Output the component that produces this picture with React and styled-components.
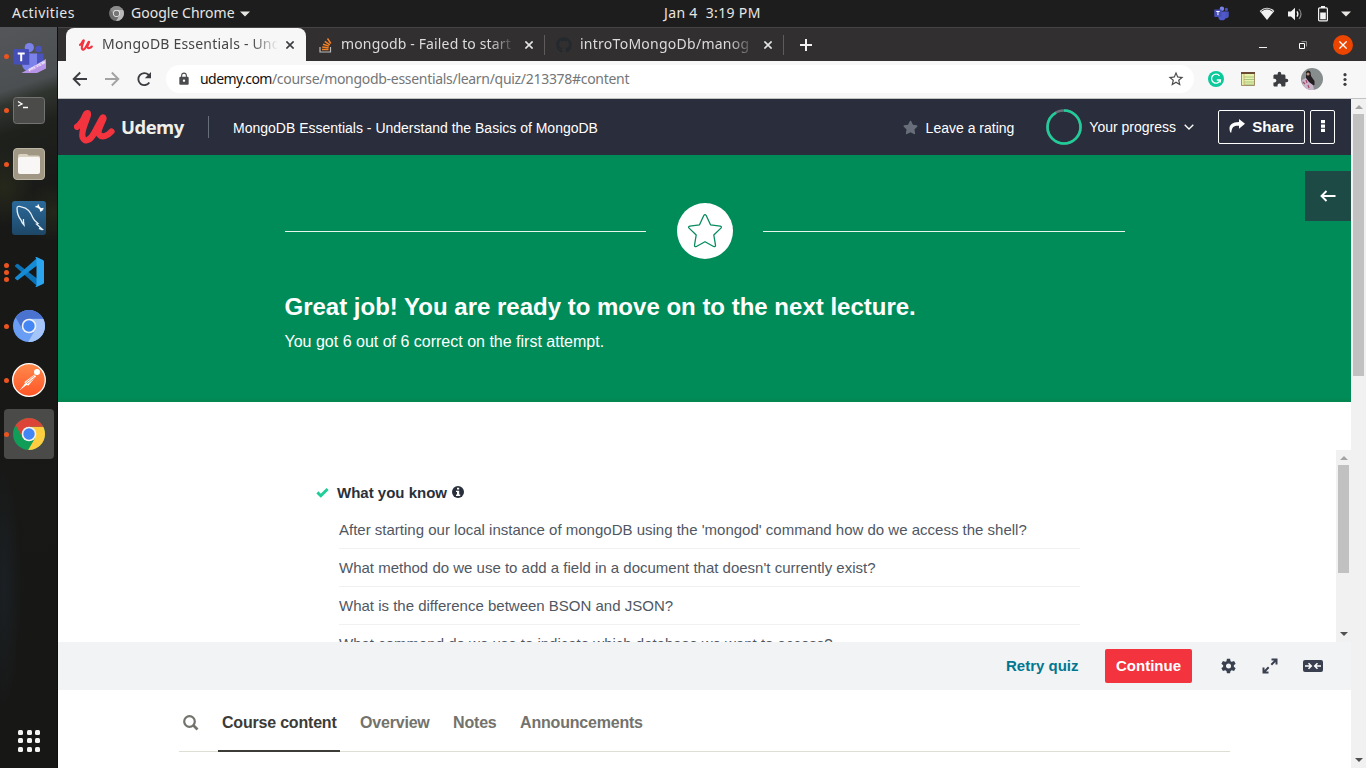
import React from "react";
import styled, { createGlobalStyle } from "styled-components";
import { FaGithub, FaStar } from "react-icons/fa";
import { MdExtension, MdStarBorder, MdLock } from "react-icons/md";

const GlobalStyle = createGlobalStyle`
  * { box-sizing: border-box; }
  body { margin: 0; overflow: hidden; background: #1d1d1d; font-family: "Liberation Sans", Arial, sans-serif; }
  svg { display: block; flex: none; }
`;

const uiFont = `"Noto Sans", "Open Sans", sans-serif`;

const Desktop = styled.div`
  width: 1366px;
  height: 768px;
  display: flex;
  flex-direction: column;
  overflow: hidden;
`;

/* ---------- system bar ---------- */
const SystemBar = styled.header`
  height: 27px;
  flex: none;
  display: grid;
  grid-template-columns: 664px auto 1fr;
  align-items: center;
  background: #1d1d1d;
  color: #e8e6e3;
  font: 14.5px ${uiFont};
`;
const SystemLeft = styled.div`
  display: flex;
  align-items: center;
  padding-left: 12px;
`;
const SystemRight = styled.div`
  display: flex;
  align-items: center;
  justify-content: flex-end;
  padding-right: 15px;
`;
const SystemText = styled.span`
  white-space: pre;
  line-height: 24px;
  padding-bottom: 2px;
  font-size: ${(p) => p.$size || 14}px;
  letter-spacing: ${(p) => p.$track || 0}px;
  width: ${(p) => p.$width}px;
`;
const Spacer = styled.span`
  flex: none;
  width: ${(p) => p.$w}px;
`;

/* ---------- dock ---------- */
const Body = styled.div`
  flex: 1;
  display: flex;
  min-height: 0;
`;
const Dock = styled.nav`
  width: 58px;
  flex: none;
  display: flex;
  flex-direction: column;
  justify-content: space-between;
  padding-top: 2px;
  border-right: 1px solid #0f0f10;
  background:
    radial-gradient(ellipse 30px 40px at 4px 160px, #26281b, transparent),
    radial-gradient(ellipse 34px 30px at 54px 185px, #24271a, transparent),
    radial-gradient(ellipse 16px 120px at 4px 560px, #1b2024, transparent),
    linear-gradient(162deg, #54565a 0, #4c4f51 62px, #30342f 76px, #1f211d 104px, #181917 180px, #171716 100%);
`;
const DockItem = styled.div`
  height: 54px;
  display: flex;
  align-items: center;
  padding-left: 4px;
`;
const DockTile = styled.div`
  width: 50px;
  height: 50px;
  border-radius: 4px;
  display: flex;
  align-items: center;
  background: ${(p) => (p.$active ? "#4a4a49" : "transparent")};
`;
const Dots = styled.span`
  width: 5px;
  flex: none;
  margin-right: 3.5px;
  display: flex;
  flex-direction: column;
  gap: 2px;
`;
const Dot = styled.i`
  width: 5px;
  height: 5px;
  border-radius: 50%;
  background: #e95420;
`;
const DockIcon = styled.div`
  width: 33px;
  display: flex;
  justify-content: center;
`;
const AppGrid = styled.div`
  display: grid;
  grid-template-columns: repeat(3, 5px);
  gap: 3.6px;
  margin: 0 0 16px 18px;
`;
const AppDot = styled.i`
  height: 5px;
  border-radius: 1.5px;
  background: #f4f4f2;
`;

/* ---------- browser chrome ---------- */
const Browser = styled.div`
  flex: 1;
  min-width: 0;
  display: flex;
  flex-direction: column;
`;
const TabStrip = styled.div`
  height: 34px;
  flex: none;
  display: flex;
  align-items: center;
  padding-left: 8px;
  background: #312f30;
  border-top: 1px solid #464445;
`;
const Tab = styled.div`
  width: ${(p) => p.$w}px;
  height: 33px;
  display: flex;
  align-items: center;
  padding: 0 10px 0 ${(p) => p.$pl}px;
  border-radius: 8px 8px 0 0;
  background: ${(p) => (p.$active ? "#f7f7f7" : "transparent")};
  color: ${(p) => (p.$active ? "#454545" : "#dcdcdc")};
`;
const TabTitle = styled.span`
  width: ${(p) => p.$w}px;
  margin-left: ${(p) => p.$ml || 8}px;
  padding-bottom: 2px;
  overflow: hidden;
  white-space: nowrap;
  font: 14px ${uiFont};
  letter-spacing: ${(p) => p.$track}px;
  line-height: 22px;
  mask-image: linear-gradient(90deg, #000 calc(100% - 26px), transparent);
`;
const TabDivider = styled.span`
  width: 1px;
  height: 20px;
  background: #5d5b5c;
`;
const WindowButtons = styled.div`
  margin-left: auto;
  display: flex;
  align-items: center;
  padding-right: 13px;
`;
const CloseWindow = styled.div`
  width: 20px;
  height: 20px;
  border-radius: 50%;
  display: grid;
  place-items: center;
  background: #eb4500;
`;
const Toolbar = styled.div`
  height: 38px;
  flex: none;
  display: flex;
  align-items: center;
  padding: 0 15px 1px 14px;
  background: #f7f7f7;
  border-bottom: 1px solid #c1c3c3;
`;
const AddressBar = styled.div`
  width: 1028px;
  height: 28px;
  margin-left: 14px;
  border-radius: 14px;
  display: flex;
  align-items: center;
  padding: 0 9px 0 11px;
  background: #fff;
  color: #4b4c4e;
`;
const Url = styled.span`
  flex: 1;
  margin-left: 9px;
  font: 14px ${uiFont};
  line-height: 22px;
  letter-spacing: -0.3px;
  color: #747678;
`;
const Host = styled.span`
  color: #111;
  letter-spacing: -0.55px;
`;
const Avatar = styled.div`
  width: 22px;
  height: 22px;
  border-radius: 50%;
  overflow: hidden;
`;

/* ---------- page ---------- */
const Viewport = styled.div`
  flex: 1;
  min-height: 0;
  display: flex;
  background: #fff;
`;
const Page = styled.main`
  flex: 1;
  min-width: 0;
  display: flex;
  flex-direction: column;
`;
const Scrollbar = styled.div`
  width: 15px;
  flex: none;
  display: flex;
  flex-direction: column;
  align-items: center;
  background: #f1f1f1;
`;
const ScrollArrow = styled.span`
  width: 0;
  height: 0;
  margin-top: ${(p) => (p.$down ? "auto" : "6px")};
  margin-bottom: ${(p) => (p.$down ? p.$gap : 5)}px;
  border: 4px solid transparent;
  border-top: ${(p) => (p.$down ? "4px solid #505050" : "0")};
  border-bottom: ${(p) => (p.$down ? "0" : "4px solid #a3a3a3")};
`;
const Thumb = styled.span`
  width: 11px;
  height: ${(p) => p.$h}px;
  background: #c1c1c1;
`;
const CourseHeader = styled.header`
  height: 56px;
  flex: none;
  display: flex;
  align-items: center;
  padding: 0 16px;
  background: #2a2d3c;
  color: #fff;
`;
const Brand = styled.span`
  margin: -1px 0 0 6px;
  width: 65px;
  font: 700 18.5px "Open Sans", sans-serif;
  letter-spacing: -0.5px;
  color: #f0f0ea;
`;
const HeaderDivider = styled.span`
  width: 1px;
  height: 22px;
  margin: 0 24px 0 22px;
  background: #686f7a;
`;
const CourseTitle = styled.span`
  flex: 1;
  padding-top: 2px;
  font-size: 14px;
  white-space: nowrap;
`;
const HeaderText = styled.span`
  padding-top: ${(p) => p.$pt || 0}px;
  font-size: 14px;
  white-space: nowrap;
`;
const OutlineButton = styled.button`
  width: ${(p) => p.$w}px;
  height: 34px;
  margin-left: ${(p) => p.$ml}px;
  padding: 0 0 2px;
  display: flex;
  align-items: center;
  justify-content: center;
  gap: 7px;
  border: 1px solid #fff;
  border-radius: 2px;
  background: transparent;
  color: #fff;
  font: bold 15px "Liberation Sans", sans-serif;
`;
const Result = styled.section`
  height: 247px;
  flex: none;
  position: relative;
  padding: 48px 226px 0 227px;
  background: linear-gradient(#008c59 0, #008c59 242px, #04854f 100%);
  color: #fff;
`;
const OpenSidebar = styled.div`
  position: absolute;
  top: 16px;
  right: 0;
  width: 46px;
  height: 50px;
  display: grid;
  place-items: center;
  background: #1e4a45;
`;
const Ornament = styled.div`
  display: flex;
  align-items: center;
  justify-content: space-between;
`;
const Rule = styled.span`
  width: ${(p) => p.$w}px;
  height: 1px;
  background: #e9f6f0;
`;
const Badge = styled.div`
  width: 56px;
  height: 56px;
  border-radius: 50%;
  display: grid;
  place-items: center;
  background: #fff;
`;
const ResultTitle = styled.h1`
  margin: 32px 0 0 -0.5px;
  font-size: 24px;
  line-height: 32px;
`;
const ResultText = styled.p`
  margin: 8px 0 0 -0.5px;
  font-size: 16px;
  line-height: 22px;
`;
const Report = styled.section`
  height: 240px;
  flex: none;
  display: flex;
  padding-top: 48px;
  overflow: hidden;
`;
const Knowledge = styled.div`
  flex: 1;
  height: 192px;
  overflow: hidden;
  padding: 32px 256px 0 258px;
`;
const KnowledgeHead = styled.h2`
  margin: 0 0 9px;
  display: flex;
  align-items: center;
  height: 20px;
  font-size: 15px;
  color: #29303b;
`;
const HeadText = styled.span`
  margin: 0 5px 0 8px;
`;
const Question = styled.div`
  height: 38px;
  margin-left: 23px;
  padding-top: 10px;
  border-bottom: 1px solid #f0f1f2;
  font-size: 15px;
  line-height: 18px;
  color: #505763;
`;
const QuizBar = styled.footer`
  height: 48px;
  flex: none;
  display: flex;
  align-items: center;
  justify-content: flex-end;
  padding-right: 28px;
  background: #f2f3f5;
  font-size: 15px;
  font-weight: bold;
  color: #3a4050;
`;
const Retry = styled.span`
  padding-bottom: 2px;
  color: #007791;
`;
const Continue = styled.button`
  width: 87px;
  height: 34px;
  margin: 0 29px 0 26.5px;
  padding: 0 0 2px;
  border: 0;
  border-radius: 2px;
  background: #f3343f;
  color: #fff;
  font: bold 15px "Liberation Sans", sans-serif;
`;
const CourseTabs = styled.nav`
  height: 62px;
  margin: 0 121px;
  display: flex;
  border-bottom: 1px solid #dedfd4;
`;
const CourseTab = styled.div`
  height: 62px;
  padding: 23px 3.5px 0 4px;
  margin-right: 16px;
  font-size: 16px;
  line-height: 20px;
  font-weight: bold;
  white-space: nowrap;
  letter-spacing: -0.2px;
  color: ${(p) => (p.$active ? "#3c3b37" : "#73726c")};
  border-bottom: ${(p) => (p.$active ? "2px solid #3c3b37" : "0")};
`;
const SearchTab = styled.div`
  width: 39px;
  padding: 25px 0 0 4px;
`;

/* ---------- drawings ---------- */
const ChromeLogo = ({ size, top, left, right, core }) => (
  <svg width={size} height={size} viewBox="0 0 32 32">
    <clipPath id={"disc" + core.slice(1) + size}><circle cx="16" cy="16" r="16" /></clipPath>
    <g clipPath={`url(#disc${core.slice(1)}${size})`}>
      <path d="M0 0h32v32H0z" fill={left} />
      <path d="M16 8.7H32V32L14.3 33.5 22.3 19.7 16 16z" fill={right} />
      <path d="M16 8.7H32V0H0l1.7 5.8 8 13.9L16 16z" fill={top} />
    </g>
    <circle cx="16" cy="16" r="7.3" fill="#f2f2f2" />
    <circle cx="16" cy="16" r="5.7" fill={core} />
  </svg>
);

const TeamsLogo = ({ size, preview }) => (
  <svg width={size} height={size * 0.97} viewBox={preview ? "0 -2 33 32" : "0 0 33 32"} overflow="visible">
    <circle cx="25.6" cy="7" r="3.2" fill="#4b53bc" />
    <path d="M22 11.5h8.5v9a5.5 5.5 0 0 1-8.5 4z" fill="#4b53bc" />
    <circle cx="16.3" cy="5.6" r="4.6" fill="#7b83eb" />
    <path d="M9 11.5h15V22a7.5 7.5 0 0 1-15 0z" fill={preview ? "#7b83eb" : "#5059c9"} />
    <path d="M9 11.5h7.5V23H9.400z" fill="#5a61cf" />
    <rect x=".5" y="7" width="15.500" height="15.500" rx="1.300" fill="#464eb8" />
    <path d="M4.700 10.500h7v1.900H9.200v6.900H7.200v-6.900H4.700z" fill="#fff" />
    {preview && (
      <g>
        <path d="M8.500 31 33 17v9.500L24 31z" fill="#b794e8" />
        <text x="16.500" y="29.800" transform="rotate(-29 16.500 29.800)" fontSize="4" fontWeight="bold" fontFamily="Liberation Sans" fill="#fff">PREVIEW</text>
      </g>
    )}
  </svg>
);

const TerminalIcon = () => (
  <svg width="32" height="27" viewBox="0 0 32 27">
    <rect x=".5" y=".5" width="31" height="26" rx="3" fill="#4b4b4a" stroke="#737372" />
    <path d="M5 4.500 9 7 5 9M10 10.500h5" stroke="#fff" strokeWidth="1.300" fill="none" />
  </svg>
);
const FilesIcon = () => (
  <svg width="32" height="32" viewBox="0 0 32 32">
    <rect x=".5" y=".5" width="31" height="31" rx="3.500" fill="#a09884" stroke="#bcb5a3" />
    <path d="M5 8q0-2 2-2h6.500q1.500 0 2 1.500H25q2 0 2 2V24H5z" fill="#d9d2c1" />
    <rect x="5" y="9" width="22" height="17" rx="2" fill="#f8f7f5" />
  </svg>
);
const MySqlIcon = () => (
  <svg width="34" height="34" viewBox="0 0 34 34">
    <linearGradient id="sea" x2="0" y2="1"><stop stopColor="#2b6a9b" /><stop offset="1" stopColor="#1d4767" /></linearGradient>
    <rect width="34" height="34" rx="3" fill="url(#sea)" />
    <path d="M9 19C5.500 15 5 9 5 7c0-2 3-2 5-.8C16 7 19 12 21 17c1 2.500 3 4 5 5.500l-1.500.5 5.500 5-3-.5 3.500 1.500M9 19c.5 2 1.500 3.500 3 5-.5-3-.8-4-.5-6" fill="none" stroke="#e8f0f6" strokeWidth="1.300" />
    <path d="M25.500 5 28 7.500 30.500 9.500" stroke="#fff" strokeWidth="2" fill="none" />
    <path d="M23.500 5.500 26 6l.5-2.500M28.500 10.500 29 8l2.500-.5" stroke="#fff" strokeWidth="1.400" fill="none" />
  </svg>
);
const VsCodeIcon = () => (
  <svg width="30" height="30" viewBox="0 0 30 30">
    <path d="M1 8.500 2.800 7q.6-.4 1.200 0L23 21.500V29L1.200 9.500q-.6-.5-.2-1z" fill="#0b72b8" />
    <path d="M1 21.500 2.800 23q.6.400 1.200 0L23 8.500V1L1.200 20.500q-.6.500-.2 1z" fill="#168bd5" />
    <path d="M22.500 0 29 3q1 .5 1 1.500v21q0 1-1 1.500l-6.500 3-1.500-.7q1.500.2 1.500-1.500V2.500Q22.500 1 21 .8z" fill="#2ba5ef" />
  </svg>
);
const PostmanIcon = () => (
  <svg width="34" height="34" viewBox="0 0 34 34">
    <linearGradient id="flame" x2="0" y2="1"><stop stopColor="#ff8a4c" /><stop offset="1" stopColor="#ff5527" /></linearGradient>
    <circle cx="17" cy="17" r="16.300" fill="url(#flame)" stroke="#fff" strokeWidth="1.300" />
    <circle cx="25" cy="9" r="3" fill="#fff" />
    <path d="m22.500 11.500 1.500 2-7.500 9-2-.500-7 5.500 5.500-7-.5-1.500z" fill="#fff" />
    <path d="m13.500 20 9-7.500M15 21l8-6.500" stroke="#ff7340" strokeWidth=".8" />
  </svg>
);
const UdemyMark = ({ width, height }) => (
  <svg width={width} height={height} viewBox="0 0 41 34">
    <path d="M3 16.800C7 14 9.500 9.500 11 6 12.500 2.500 14.800 2 13.700 6 12 12 6.500 22 8.700 27.500c2 5.500 8 2.500 11.500-4.500L28 8.500c.8-1.500 2-1.200 1.300.6C27 15 23 21.500 25.200 24.500c2.800 3.500 8.300 1.500 12.300-3" fill="none" stroke="#f3343f" strokeWidth="6.300" strokeLinecap="round" strokeLinejoin="round" />
  </svg>
);
const Cross = ({ color, size = 8, weight = 1.6 }) => (
  <svg width={size} height={size} viewBox="0 0 8 8">
    <path d="m.4.4 7.200 7.200M7.600.4.4 7.600" stroke={color} strokeWidth={weight} />
  </svg>
);
const BackIcon = () => (
  <svg width="16" height="16" viewBox="0 0 16 16">
    <path d="M15 8H2M8.200 1.500 1.700 8l6.500 6.500" fill="none" stroke="#3c3d40" strokeWidth="1.900" />
  </svg>
);
const ForwardIcon = () => (
  <svg width="16" height="16" viewBox="0 0 16 16">
    <path d="M1 8h13M7.800 1.500 14.300 8l-6.500 6.500" fill="none" stroke="#a3a3a4" strokeWidth="1.900" />
  </svg>
);
const ReloadIcon = () => (
  <svg width="16" height="16" viewBox="0 0 16 16">
    <path d="M13.300 11.500A6 6 0 1 1 12.500 3.800L14 5.500" fill="none" stroke="#3c3d40" strokeWidth="1.900" />
    <path d="M15 1v6.200H8.800z" fill="#3c3d40" />
  </svg>
);
const StackIcon = () => (
  <svg width="14" height="16" viewBox="0 0 14 16">
    <path d="M1 10v5h10.500v-5" fill="none" stroke="#bcbbbb" strokeWidth="1.200" />
    <path d="M3 12.600h6.500M3.200 10l6.400.7M4 7.200l6 1.900M5.800 4.300l5 3.500M8.500 1.500l3.300 5" stroke="#f48024" strokeWidth="1.500" />
  </svg>
);
const Dots3 = ({ color, size = 13 }) => (
  <svg width="4" height={size} viewBox="0 0 4 13">
    {[1.7, 6.5, 11.3].map((y) => <circle key={y} cx="2" cy={y} r="1.600" fill={color} />)}
  </svg>
);
const ShareArrow = () => (
  <svg width="16" height="14" viewBox="0 0 16 14">
    <path d="M10 0l6 4.800-6 5V6.800C5.500 6.500 2.800 7.500 2.300 13.500H1.300C-.8 8 .8 3 10 2.900z" fill="#fff" />
  </svg>
);
const CheckMark = () => (
  <svg width="13" height="11" viewBox="0 0 13 11">
    <path d="m1.400 5.400 3.400 3.400 6.800-6.800" fill="none" stroke="#1ecd97" strokeWidth="2.900" />
  </svg>
);
const InfoMark = () => (
  <svg width="12" height="12" viewBox="0 0 12 12">
    <circle cx="6" cy="6" r="6" fill="#29303b" />
    <path d="M5 1.800h2.200v1.700H5zM4 4.700h3.200v3.800h1V10H4V8.500h1V6.100H4z" fill="#fff" />
  </svg>
);
const gearTeeth = [0, 60, 120, 180, 240, 300];
const Gear = () => (
  <svg width="15" height="16" viewBox="0 0 16 16">
    <circle cx="8" cy="8" r="4.200" fill="none" stroke="#3a4050" strokeWidth="3" />
    {gearTeeth.map((deg) => (
      <path key={deg} d="M6.300.2h3.400l.6 3.300H5.700z" fill="#3a4050" transform={`rotate(${deg} 8 8)`} />
    ))}
  </svg>
);
const ExpandIcon = () => (
  <svg width="16" height="16" viewBox="0 0 16 16" fill="none" stroke="#3a4050" strokeWidth="2">
    <path d="M9.500 1.500h5V6.500M14.500 1.500 9.300 6.700M6.500 14.500h-5V9.500M1.500 14.500l5.200-5.200" />
  </svg>
);
const TheaterIcon = () => (
  <svg width="20" height="12" viewBox="0 0 20 12">
    <rect width="20" height="12" rx="2" fill="#3a4050" />
    <path d="M2 6h6M5.500 3.200 8.300 6 5.500 8.800M18 6h-6M14.500 3.200 11.700 6l2.800 2.800" fill="none" stroke="#fff" strokeWidth="1.500" />
  </svg>
);
const SearchGlyph = () => (
  <svg width="16" height="16" viewBox="0 0 16 16" fill="none" stroke="#73726c">
    <circle cx="6.500" cy="6.500" r="5.300" strokeWidth="2.200" />
    <path d="m10.500 10.500 4 4" strokeWidth="2.700" />
  </svg>
);
const OutlineStar = () => (
  <svg width="36" height="36" viewBox="0 0 36 36">
    <path d="M16.800 2.500q1.200-1.800 2.400 0l4.300 9.300 9.700 1.300q2 .5.700 2L26.800 22l1.700 10.200q0 2-1.900 1.300L18 28.700l-8.600 4.800q-1.900.7-1.900-1.300L9.200 22 2.100 15.100q-1.300-1.500.7-2l9.700-1.300z" fill="none" stroke="#078b60" strokeWidth="1.300" strokeLinejoin="round" />
  </svg>
);

const dockApps = [
  { id: "teams", dots: 1, icon: <TeamsLogo size={33} preview /> },
  { id: "terminal", dots: 1, icon: <TerminalIcon /> },
  { id: "files", dots: 1, icon: <FilesIcon /> },
  { id: "mysql", dots: 0, icon: <MySqlIcon /> },
  { id: "code", dots: 3, icon: <VsCodeIcon /> },
  { id: "chromium", dots: 1, icon: <ChromeLogo size={32} top="#4a73d0" left="#6a9df4" right="#a4c5fa" core="#4486f4" /> },
  { id: "postman", dots: 1, icon: <PostmanIcon /> },
  { id: "chrome", dots: 1, active: true, icon: <ChromeLogo size={32} top="#db4437" left="#0f9d58" right="#ffcd40" core="#4285f4" /> },
];

const questions = [
  "After starting our local instance of mongoDB using the 'mongod' command how do we access the shell?",
  "What method do we use to add a field in a document that doesn't currently exist?",
  "What is the difference between BSON and JSON?",
  "What command do we use to indicate which database we want to access?",
];

const TopPanel = () => (
  <SystemBar>
    <SystemLeft>
      <SystemText $width={97} $track={0.45}>Activities</SystemText>
      <ChromeLogo size={15} top="#8b8b8b" left="#6e6e6e" right="#b8b8b8" core="#777777" />
      <Spacer $w={7} />
      <SystemText $width={109} $track={0.02}>Google Chrome</SystemText>
      <svg width="10" height="6"><path d="M0 .5h10L5 5.500z" fill="#e8e6e3" /></svg>
    </SystemLeft>
    <SystemText $size={14} $width={97} $track={0.35}>Jan 4  3:19 PM</SystemText>
    <SystemRight>
      <TeamsLogo size={16} />
      <Spacer $w={29} />
      <svg width="16" height="14" viewBox="0 0 16 14">
        <path d="M.7 4Q8-2.500 15.300 4L8 13z" fill="#f2f2f2" />
        <path d="M2.300 4.300Q8-.3 13.700 4.300" fill="none" stroke="#1d1d1d" strokeWidth=".8" />
      </svg>
      <Spacer $w={13} />
      <svg width="15" height="14" viewBox="0 0 15 14">
        <path d="M0 4.500h3L7 .8v12.400L3 9.500H0z" fill="#f2f2f2" />
        <path d="M9 4.300q1.800 2.700 0 5.400" fill="none" stroke="#f2f2f2" strokeWidth="1.300" />
        <path d="M11 2q4 5 0 10" fill="none" stroke="#8a8a8a" strokeWidth="1.200" />
      </svg>
      <Spacer $w={15} />
      <svg width="10" height="16" viewBox="0 0 10 16">
        <path d="M3 0h4v2H3z" fill="#f2f2f2" />
        <rect x=".6" y="1.900" width="8.800" height="13" rx="1" fill="none" stroke="#f2f2f2" strokeWidth="1.200" />
        <path d="M2.200 6.500h5.600v6.800H2.200z" fill="#f2f2f2" />
      </svg>
      <Spacer $w={13} />
      <svg width="10" height="6"><path d="M0 .5h10L5 5.500z" fill="#e8e6e3" /></svg>
    </SystemRight>
  </SystemBar>
);

const Launcher = () => (
  <Dock>
    <div>
      {dockApps.map((app) => (
        <DockItem key={app.id}>
          <DockTile $active={app.active}>
            <Dots>{Array.from({ length: app.dots }, (_, i) => <Dot key={i} />)}</Dots>
            <DockIcon>{app.icon}</DockIcon>
          </DockTile>
        </DockItem>
      ))}
    </div>
    <AppGrid>{Array.from({ length: 9 }, (_, i) => <AppDot key={i} />)}</AppGrid>
  </Dock>
);

const Tabs = () => (
  <TabStrip>
    <Tab $active $w={240} $pl={13}>
      <UdemyMark width={14} height={12} />
      <TabTitle $w={176} $ml={9} $track={0.2}>MongoDB Essentials - Und</TabTitle>
      <Spacer $w={8} />
      <Cross color="#3c3d40" />
    </Tab>
    <Tab $w={238} $pl={13}>
      <StackIcon />
      <TabTitle $w={175} $track={0.14}>mongodb - Failed to start m</TabTitle>
      <Spacer $w={9} />
      <Cross color="#e4e4e4" />
    </Tab>
    <TabDivider />
    <Tab $w={238} $pl={11}>
      <FaGithub size={16} color="#24292e" />
      <TabTitle $w={175} $track={0.26}>introToMongoDb/manog</TabTitle>
      <Spacer $w={9} />
      <Cross color="#e4e4e4" />
    </Tab>
    <TabDivider />
    <Spacer $w={16} />
    <svg width="12" height="12"><path d="M6 0v12M0 6h12" stroke="#f2f2f2" strokeWidth="2" /></svg>
    <WindowButtons>
      <svg width="8" height="8"><path d="M0 6.500h8" stroke="#f2f2f2" /></svg>
      <Spacer $w={32} />
      <svg width="8" height="8" fill="none"><path d="M2.500.5h5v5" stroke="#8c8b8b" /><path d="M.5 2.500h5v5h-5z" stroke="#fff" /></svg>
      <Spacer $w={26} />
      <CloseWindow><Cross color="#fff" weight={1.300} /></CloseWindow>
    </WindowButtons>
  </TabStrip>
);

const NavigationBar = () => (
  <Toolbar>
    <BackIcon />
    <Spacer $w={16} />
    <ForwardIcon />
    <Spacer $w={16} />
    <ReloadIcon />
    <AddressBar>
      <MdLock size={14} />
      <Url><Host>udemy.com</Host>/course/mongodb-essentials/learn/quiz/213378#content</Url>
      <MdStarBorder size={18} />
    </AddressBar>
    <Spacer $w={14} />
    <svg width="16" height="16" viewBox="0 0 16 16">
      <circle cx="8" cy="8" r="8" fill="#0ac99b" />
      <path d="M11.500 4.800A4.500 4.500 0 1 0 12.300 9H8.800M12.300 8.500v3" fill="none" stroke="#fff" strokeWidth="1.300" />
    </svg>
    <Spacer $w={17} />
    <svg width="14" height="14" viewBox="0 0 14 14">
      <path d="M.5.5h13v13H.5z" fill="#e7f3ac" stroke="#a08f67" />
      <path d="M0 0h14v2H0z" fill="#6b4b35" />
      <path d="M3 5h10M3 7.500h10M3 10h10M3 12.200h10" stroke="#97b877" strokeWidth=".8" />
      <path d="M3 2v12" stroke="#d29c66" strokeWidth=".7" />
    </svg>
    <Spacer $w={17} />
    <MdExtension size={17} color="#3c3d40" />
    <Spacer $w={12} />
    <Avatar>
      <svg width="22" height="22" viewBox="0 0 22 22">
        <path d="M0 0h22v22H0z" fill="#868d8c" />
        <path d="M5 4q2.500-3 4.500 0l.5 4 3.500 5v4l-4.500 1-4-6z" fill="#211d20" />
        <circle cx="7" cy="6" r="1.600" fill="#b98f7e" />
        <path d="m1 12 4-2 3 4 4 3 1 5H3z" fill="#c9b6cc" />
        <path d="m2 14 2 2m1-4 1 3m1 2 1 3" stroke="#a64865" strokeWidth="1.200" />
      </svg>
    </Avatar>
    <Spacer $w={20} />
    <Dots3 color="#3c3d40" />
  </Toolbar>
);

const CourseBar = () => (
  <CourseHeader>
    <UdemyMark width={41} height={34} />
    <Brand>Udemy</Brand>
    <HeaderDivider />
    <CourseTitle>MongoDB Essentials - Understand the Basics of MongoDB</CourseTitle>
    <FaStar size={15} color="#686f7a" />
    <Spacer $w={7.5} />
    <HeaderText $pt={2}>Leave a rating</HeaderText>
    <Spacer $w={31.5} />
    <svg width="36" height="36" viewBox="0 0 36 36" fill="none" strokeWidth="2.600">
      <circle cx="18" cy="18" r="16.500" stroke="#686f7a" />
      <circle cx="18" cy="18" r="16.500" stroke="#1ecd97" pathLength="100" strokeDasharray="92 8" transform="rotate(-90 18 18)" />
    </svg>
    <Spacer $w={7.5} />
    <HeaderText>Your progress</HeaderText>
    <Spacer $w={8} />
    <svg width="10" height="6" viewBox="0 0 10 6"><path d="m.7.7 4.300 4.300L9.300.7" fill="none" stroke="#fff" strokeWidth="1.300" /></svg>
    <OutlineButton $w={87} $ml={24}><ShareArrow />Share</OutlineButton>
    <OutlineButton $w={25} $ml={5}>
      <svg width="4" height="12"><path d="M0 0h4v3.300H0zM0 4.400h4v3.300H0zM0 8.700h4V12H0z" fill="#fff" /></svg>
    </OutlineButton>
  </CourseHeader>
);

export default function App() {
  return (
    <Desktop>
      <GlobalStyle />
      <TopPanel />
      <Body>
        <Launcher />
        <Browser>
          <Tabs />
          <NavigationBar />
          <Viewport>
            <Page>
              <CourseBar />
              <Result>
                <OpenSidebar>
                  <svg width="16" height="12" viewBox="0 0 16 12"><path d="M15.500 6H1.500M6.500 1l-5 5 5 5" fill="none" stroke="#fff" strokeWidth="1.900" /></svg>
                </OpenSidebar>
                <Ornament>
                  <Rule $w={361} />
                  <Badge><OutlineStar /></Badge>
                  <Rule $w={362} />
                </Ornament>
                <ResultTitle>Great job! You are ready to move on to the next lecture.</ResultTitle>
                <ResultText>You got 6 out of 6 correct on the first attempt.</ResultText>
              </Result>
              <Report>
                <Knowledge>
                  <KnowledgeHead>
                    <CheckMark />
                    <HeadText>What you know</HeadText>
                    <InfoMark />
                  </KnowledgeHead>
                  {questions.map((q) => <Question key={q}>{q}</Question>)}
                </Knowledge>
                <Scrollbar>
                  <ScrollArrow />
                  <Thumb $h={108} />
                  <ScrollArrow $down $gap={6} />
                </Scrollbar>
              </Report>
              <QuizBar>
                <Retry>Retry quiz</Retry>
                <Continue>Continue</Continue>
                <Gear />
                <Spacer $w={26} />
                <ExpandIcon />
                <Spacer $w={25} />
                <TheaterIcon />
              </QuizBar>
              <CourseTabs>
                <SearchTab><SearchGlyph /></SearchTab>
                <CourseTab $active>Course content</CourseTab>
                <CourseTab>Overview</CourseTab>
                <CourseTab>Notes</CourseTab>
                <CourseTab>Announcements</CourseTab>
              </CourseTabs>
            </Page>
            <Scrollbar>
              <ScrollArrow />
              <Thumb $h={262} />
              <ScrollArrow $down $gap={6} />
            </Scrollbar>
          </Viewport>
        </Browser>
      </Body>
    </Desktop>
  );
}
